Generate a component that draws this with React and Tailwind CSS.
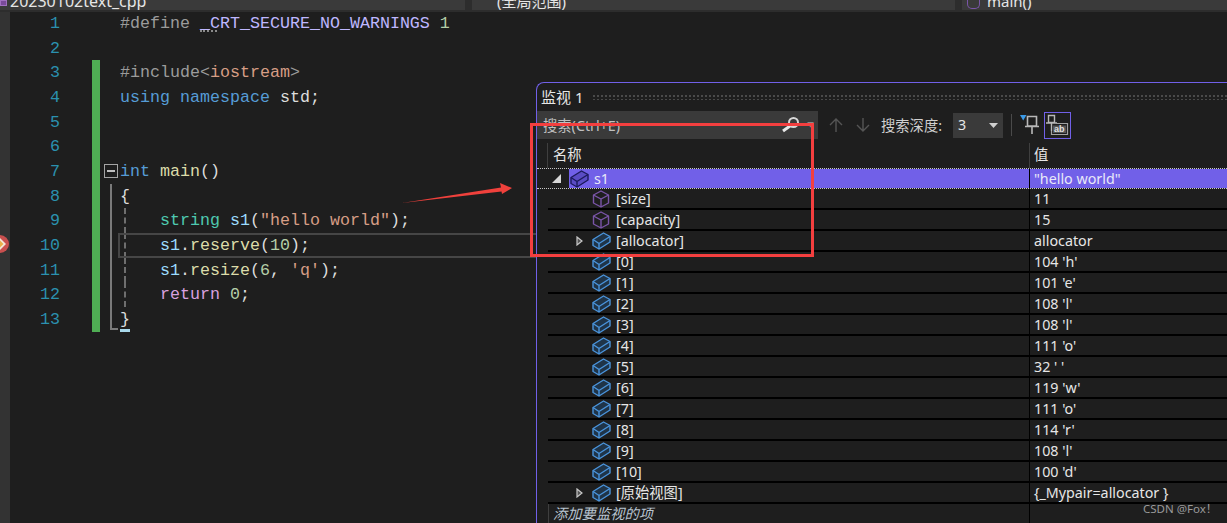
import React from 'react';

const sans = 'font-["Noto_Sans","Noto_Sans_CJK_SC",sans-serif]';

function FieldIcon({ dark }) {
  const c = dark ? '#1c1a5c' : '#4a94dc';
  return (
    <svg width="19" height="18" viewBox="0 0 19 18" fill="none" className="shrink-0">
      <path d="M1 7.500 11.500 1 18 4.500V10L7 17 1 13.500z" fill={dark ? '#5a4cc4' : '#1f3448'} stroke={c} strokeWidth="1.4" strokeLinejoin="round" />
      <path d="M1 7.500 7 11.500 18 4.500M7 11.500V17" stroke={c} strokeWidth="1.4" />
    </svg>
  );
}

function CubeIcon() {
  return (
    <svg width="18" height="18" viewBox="0 0 18 18" fill="none" className="shrink-0">
      <path d="M9 1 16.500 5v8L9 17l-7.500-4V5z" stroke="#7a55a8" strokeWidth="1.4" strokeLinejoin="round" />
      <path d="M1.500 5 9 9l7.500-4M9 9v8" stroke="#7a55a8" strokeWidth="1.4" />
    </svg>
  );
}

function Expander() {
  return (
    <svg width="7" height="10" viewBox="0 0 7 10" className="shrink-0">
      <path d="M1 1l5 4-5 4z" fill="#555" stroke="#c8c8c8" strokeWidth="1.2" />
    </svg>
  );
}

function Pin() {
  return (
    <svg width="20" height="24" viewBox="0 0 20 24" fill="none">
      <path d="M0 2h6.500L3.200 7.500z" fill="#3c9be8" />
      <path d="M7.500 3.500h9V13h-9zM5 13.500h14M12 13.500V21" stroke="#b8b8b8" strokeWidth="1.6" />
    </svg>
  );
}

function PinText() {
  return (
    <svg width="25" height="25" viewBox="0 0 25 25" fill="none">
      <path d="M3.500 2.500h6v7h-6zM1 10h11M6.500 10v8" stroke="#b8b8b8" strokeWidth="1.4" />
      <path d="M11 10.500h11.500v11H6.500V18" stroke="#a0a0a0" strokeWidth="1.2" />
      <rect x="8" y="12.500" width="13" height="7.500" fill="#555" />
      <text x="9" y="19" fontSize="9" fontWeight="700" fill="#e0e0e0" fontFamily="Liberation Sans">ab</text>
    </svg>
  );
}

const tok = {
  pre: 'text-[#9b9b9b]',
  mac: 'text-[#beb7ff]',
  num: 'text-[#b5cea8]',
  str: 'text-[#d69d85]',
  kw: 'text-[#569cd6]',
  fn: 'text-[#dcdcaa]',
  pl: 'text-[#dcdcdc]',
  ty: 'text-[#4ec9b0]',
  v: 'text-[#9cdcfe]',
  ret: 'text-[#d8a0df]',
};

const code = [
  [['pre', '#define '], ['mac', '_CRT_SECURE_NO_WARNINGS'], ['num', ' 1']],
  [],
  [['pre', '#include<'], ['str', 'iostream'], ['pre', '>']],
  [['kw', 'using namespace '], ['pl', 'std;']],
  [],
  [],
  [['kw', 'int '], ['fn', 'main'], ['pl', '()']],
  [['pl', '{']],
  [['ty', '    string '], ['v', 's1'], ['pl', '('], ['str', '"hello world"'], ['pl', ');']],
  [['v', '    s1'], ['pl', '.'], ['fn', 'reserve'], ['pl', '('], ['num', '10'], ['pl', ');']],
  [['v', '    s1'], ['pl', '.'], ['fn', 'resize'], ['pl', '('], ['num', '6'], ['pl', ', '], ['str', "'q'"], ['pl', ');']],
  [['ret', '    return '], ['num', '0'], ['pl', ';']],
  [['pl', '}']],
];

function CodeLine({ n, parts }) {
  const changed = n >= 3;
  const folded = n > 7;
  const dashed = n >= 9 && n <= 12;
  return (
    <div className="relative flex h-[24.67px] items-center leading-[24.67px]">
      <div className="h-full w-[10px]" />
      <div className="h-full w-[50px] pt-px text-right text-[#2b91af]">{n}</div>
      <div className="w-[32px]" />
      <div className={`h-full w-[8px] ${changed ? 'bg-[#4fae54]' : ''}`} />
      <div className="relative h-full w-[20px]">
        {n === 7 && (
          <div className="absolute left-[4px] top-[5px] flex h-[14px] w-[14px] items-center justify-center border border-[#a5a5a5]">
            <div className="h-[2px] w-[8px] bg-[#c0c0c0]" />
          </div>
        )}
        {folded && <div className={`absolute left-[10px] top-0 w-[2px] bg-[#7a7a7a] ${n === 13 ? 'h-[22px]' : 'h-full'}`} />}
        {n === 13 && <div className="absolute left-[10px] top-[21px] h-[2px] w-[8px] bg-[#7a7a7a]" />}
      </div>
      <div className="h-full whitespace-pre pt-px">
        {parts.map(([k, t], i) => (
          <span key={i} className={tok[k]}>{t}</span>
        ))}
      </div>
      {dashed && <div className="absolute bottom-0 left-[124px] top-0 border-l-2 border-dashed border-[#6e6e6e]" />}
      {n === 1 && <div className="absolute left-[200px] top-[19px] w-[17px] border-b-2 border-dotted border-[#8a8a8a]" />}
      {n === 10 && <div className="absolute bottom-0 left-[118px] right-0 top-0 border-2 border-[#464646]" />}
      {n === 10 && (
        <svg width="9" height="18" viewBox="0 0 9 18" className="absolute left-0 top-[2px]">
          <circle cx="0" cy="9" r="9" fill="#c9504f" />
          <path d="M0 3l6 6-6 6z" fill="#f2e6d8" />
          <path d="M0 5.500 3.500 9 0 12.500z" fill="#e8b04a" />
        </svg>
      )}
      {n === 13 && <div className="absolute left-[120px] top-[22px] h-[3px] w-[10px] bg-[#a8d8ea]" />}
    </div>
  );
}

const rows = [
  ['cube', '[size]', '11'],
  ['cube', '[capacity]', '15'],
  ['field', '[allocator]', 'allocator', true],
  ['field', '[0]', "104 'h'"],
  ['field', '[1]', "101 'e'"],
  ['field', '[2]', "108 'l'"],
  ['field', '[3]', "108 'l'"],
  ['field', '[4]', "111 'o'"],
  ['field', '[5]', "32 ' '"],
  ['field', '[6]', "119 'w'"],
  ['field', '[7]', "111 'o'"],
  ['field', '[8]', "114 'r'"],
  ['field', '[9]', "108 'l'"],
  ['field', '[10]', "100 'd'"],
  ['field', '[原始视图]', '{_Mypair=allocator }', true],
];

function WatchRow({ icon, name, value, expand }) {
  return (
    <div className="ml-[11px] flex h-[21px] items-center border-b-2 border-black">
      <div className="flex h-full w-[481px] items-center">
        <div className="flex w-[37px] justify-end pr-[2px]">{expand && <Expander />}</div>
        <div className="ml-[4px] flex w-[24px] justify-center">{icon === 'cube' ? <CubeIcon /> : <FieldIcon />}</div>
        <span className="ml-[3px] whitespace-nowrap text-[#e6e6e6]">{name}</span>
      </div>
      <div className="h-full flex-1 border-l border-black pl-[4px] leading-[20px] text-[#e6e6e6]">{value}</div>
    </div>
  );
}

function WatchWindow() {
  return (
    <div className={`absolute bottom-0 left-[536px] right-0 top-[82px] rounded-tl-lg border-l border-t border-[#7160e8] bg-[#1e1e1e] text-[14.3px] ${sans}`}>
      <div className="flex h-[28px] items-center">
        <span className="ml-[4px] w-[51px] text-[15px] text-[#e6e6e6]">监视 1</span>
        <div className="h-[6px] flex-1 bg-[radial-gradient(#4a4a4a_1px,transparent_1px)] bg-[length:4px_4px]" />
      </div>

      <div className="flex h-[28px] items-center">
        <div className="flex h-full w-[281px] items-center justify-between bg-[#3a3a3a] pl-[6px] pr-[4px] text-[#c0c0c0]">
          <span className="pt-[2px]">搜索(Ctrl+E)</span>
          <span className="flex items-center gap-[6px]">
            <svg width="20" height="18" viewBox="0 0 20 18" fill="none">
              <circle cx="12.500" cy="6.500" r="4.500" stroke="#d8d8d8" strokeWidth="2" />
              <path d="M9 10l-7 5" stroke="#e8e8e8" strokeWidth="3" />
            </svg>
            <span className="text-[7px] text-[#888]">▼</span>
          </span>
        </div>
        <svg width="16" height="16" viewBox="0 0 16 16" fill="none" className="ml-[10px]">
          <path d="M8 15V2M2 8l6-6 6 6" stroke="#555" strokeWidth="1.4" />
        </svg>
        <svg width="16" height="16" viewBox="0 0 16 16" fill="none" className="ml-[11px]">
          <path d="M8 1v13M2 8l6 6 6-6" stroke="#555" strokeWidth="1.4" />
        </svg>
        <span className="ml-[10px] w-[64px] whitespace-nowrap pt-[2px] text-[#d0d0d0]">搜索深度:</span>
        <div className="ml-[8px] flex h-[25px] w-[50px] items-center justify-between bg-[#3a3a3a] px-[5px] text-[#e6e6e6]">
          3
          <svg width="9" height="5" viewBox="0 0 9 5"><path d="M0 0h9L4.500 5z" fill="#d0d0d0" /></svg>
        </div>
        <div className="ml-[8px] h-[22px] w-px bg-[#4a4a4a]" />
        <div className="ml-[8px] flex h-[24px] items-center"><Pin /></div>
        <div className="ml-[4px] flex h-[27px] w-[27px] items-center justify-center border border-[#7160e8]"><PinText /></div>
      </div>

      <div className="ml-[10px] mt-[4px] flex h-[25px] items-center text-[#e6e6e6]">
        <div className="h-full w-[482px] border-l border-[#3f3f3f] pl-[5px] leading-[24px]">名称</div>
        <div className="h-full flex-1 border-l border-[#3f3f3f] pl-[4px] leading-[24px]">值</div>
      </div>

      <div className="flex h-[21px] items-center border-y border-dotted border-[#c8c8c8]">
        <div className="flex w-[32px] justify-end pr-[8px]">
          <svg width="9" height="9" viewBox="0 0 9 9"><path d="M9 0v9H0z" fill="#d8d8d8" /></svg>
        </div>
        <div className="flex h-full flex-1 items-center bg-[#7160e8] text-[#e8e8f8]">
          <div className="flex h-full w-[460px] items-center pl-[1px]">
            <FieldIcon dark />
            <span className="ml-[5px]">s1</span>
          </div>
          <div className="h-full flex-1 border-l border-black pl-[4px] leading-[20px]">"hello world"</div>
        </div>
      </div>

      {rows.map(([icon, name, value, expand]) => (
        <WatchRow key={name} icon={icon} name={name} value={value} expand={expand} />
      ))}

      <div className="ml-[11px] flex h-[20px]">
        <div className="w-[481px] border-l border-[#3f3f3f] pl-[4px] italic leading-[20px] text-[#b8c4d0]">添加要监视的项</div>
        <div className="flex-1 border-l border-black" />
      </div>
    </div>
  );
}

export default function App() {
  return (
    <div className='relative h-[523px] w-[1227px] overflow-hidden bg-[#1e1e1e] font-["Liberation_Mono",monospace] text-[16.67px]'>
      <div className={`flex h-[12px] border-b-2 border-[#2d2d2d] bg-[#2d2d2d] text-[#e6e6e6] ${sans}`}>
        <div className="flex h-[10px] w-[465px] overflow-hidden bg-[#3a3a3a] text-[16px] leading-[20px]">
          <div className="h-[6px] w-[7px] border border-[#a070c0] bg-[#7a4a9a]" />
          <div className="-mt-[9px] ml-[3px]">20230102text_cpp</div>
        </div>
        <div className="ml-[7px] h-[10px] w-[483px] overflow-hidden bg-[#3a3a3a] pl-[25px] text-[15px] leading-[20px]">
          <div className="-mt-[9px]">(全局范围)</div>
        </div>
        <div className="ml-[7px] flex h-[10px] flex-1 overflow-hidden bg-[#3a3a3a] pl-[5px] text-[15px] leading-[20px]">
          <div className="h-[9px] w-[13px] rounded-b-[5px] border-x border-b border-[#7a55a8]" />
          <div className="-mt-[9px] ml-[7px]">main()</div>
        </div>
      </div>

      <div className="absolute bottom-0 left-0 top-[12px] w-[10px] bg-[#333333]" />

      <div className="-mt-px">
        {code.map((parts, i) => (
          <CodeLine key={i} n={i + 1} parts={parts} />
        ))}
      </div>

      <WatchWindow />

      {/* red annotations drawn over the screenshot */}
      <svg width="125" height="30" viewBox="0 0 125 30" className="absolute left-[395px] top-[178px]">
        <path d="M7 25 106 9.500 105 5 117 10 107 16 106.500 13.500z" fill="#f0413c" />
      </svg>
      <div className="absolute left-[530px] top-[123px] h-[134px] w-[284px] border-[3px] border-[#f43f3f]" />

      <div className={`absolute left-[1143px] top-[500px] text-[11.5px] text-[#9a9a9a] ${sans}`}>CSDN @Fox！</div>
    </div>
  );
}
